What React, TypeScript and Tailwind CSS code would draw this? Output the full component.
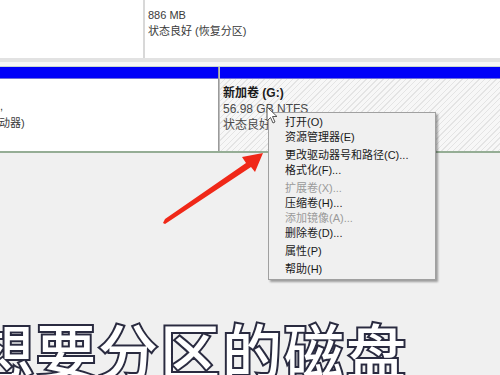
import React from 'react';

const menuFont = { fontFamily: '"Liberation Sans", "Noto Sans CJK SC", sans-serif' };

type MenuItem = { label: string; disabled?: boolean } | 'sep';

const menuItems: MenuItem[] = [
  { label: '打开(O)' },
  { label: '资源管理器(E)' },
  'sep',
  { label: '更改驱动器号和路径(C)...' },
  { label: '格式化(F)...' },
  'sep',
  { label: '扩展卷(X)...', disabled: true },
  { label: '压缩卷(H)...' },
  { label: '添加镜像(A)...', disabled: true },
  { label: '删除卷(D)...' },
  'sep',
  { label: '属性(P)' },
  'sep',
  { label: '帮助(H)' },
];

const ContextMenu: React.FC = () => (
  <div
    className="absolute left-[268px] top-[112px] w-[168px] bg-[#f0f0f0] border border-[#a0a0a0] shadow-[2px_2px_2px_rgba(0,0,0,0.35)] py-[2px] text-[11px] leading-[15px]"
    style={menuFont}
  >
    {menuItems.map((item, i) =>
      item === 'sep' ? (
        <div key={i} className="h-[3px]" />
      ) : (
        <div
          key={i}
          className={`pl-[16px] h-[15px] ${item.disabled ? 'text-[#9a9a9a]' : 'text-[#1a1a1a]'}`}
        >
          {item.label}
        </div>
      )
    )}
  </div>
);

const App: React.FC = () => {
  return (
    <div className="relative w-[500px] h-[375px] overflow-hidden bg-[#f0f0f0]" style={menuFont}>
      {/* top volume row */}
      <div className="flex h-[58px] bg-white">
        <div className="w-[145px] border-r-2 border-[#d8d8d8]" />
        <div className="pl-[3px] pt-[7px] text-[11px] leading-[16px] text-[#3a3a3a]">
          <div>886 MB</div>
          <div>状态良好 (恢复分区)</div>
        </div>
      </div>
      <div className="h-[4px] bg-[#e2e2e2]" />
      <div className="h-[5px] bg-[#f6f6f6] border-b border-[#c8d8d0]" />

      {/* disk row */}
      <div className="flex h-[86px] border-b-2 border-[#95ad95]">
        <div className="w-[219px] flex flex-col bg-white border-r border-[#9a9a9a]">
          <div className="h-[12px] bg-[#0000f8] border-b border-[#6f6fd8]" />
          <div className="pt-[19px] text-[11px] leading-[17px] text-[#3a3a3a]">
            <div className="ml-0">,</div>
            <div className="-ml-[1px]">动器)</div>
          </div>
        </div>
        <div className="flex-1 flex flex-col border-l border-[#bdbdbd]">
          <div className="h-[12px] bg-[#0000f8] border-b border-[#6f6fd8]" />
          <div className="flex-1 bg-[repeating-linear-gradient(135deg,#f7f7f7_0px,#f7f7f7_3px,#e4e4e4_3px,#e4e4e4_4px)] pl-[3px] pt-[6px] text-[12px] leading-[16px] text-[#4a4a4a]">
            <div className="font-bold text-[#1a1a1a]">新加卷 (G:)</div>
            <div>56.98 GB NTFS</div>
            <div>状态良好</div>
          </div>
        </div>
      </div>

      {/* subtitle */}
      <div
        className="absolute left-[-26px] top-[313px] whitespace-nowrap text-[60px] leading-[72px] text-white tracking-[2px] [-webkit-text-stroke:4px_#2a2b40] [paint-order:stroke_fill]"
        style={{ fontFamily: '"Noto Sans CJK SC", sans-serif', fontWeight: 500 }}
      >
        想要分区的磁盘
      </div>

      <ContextMenu />

      {/* red arrow */}
      <svg className="absolute left-0 top-0" width="500" height="375" viewBox="0 0 500 375">
        <polygon
          points="163,223 165,219 246,163 242,157 263,153 255,172 251,167 165,224"
          fill="#f02818"
        />
      </svg>

      {/* mouse cursor */}
      <svg className="absolute left-[266px] top-[106px]" width="12" height="19" viewBox="0 0 12 19">
        <path
          d="M1 1 L1 15 L4.5 11.5 L7 17 L9 16 L6.5 10.5 L11 10.5 Z"
          fill="#ffffff"
          stroke="#555"
          strokeWidth="1"
          strokeLinejoin="round"
        />
      </svg>
    </div>
  );
};

export default App;
